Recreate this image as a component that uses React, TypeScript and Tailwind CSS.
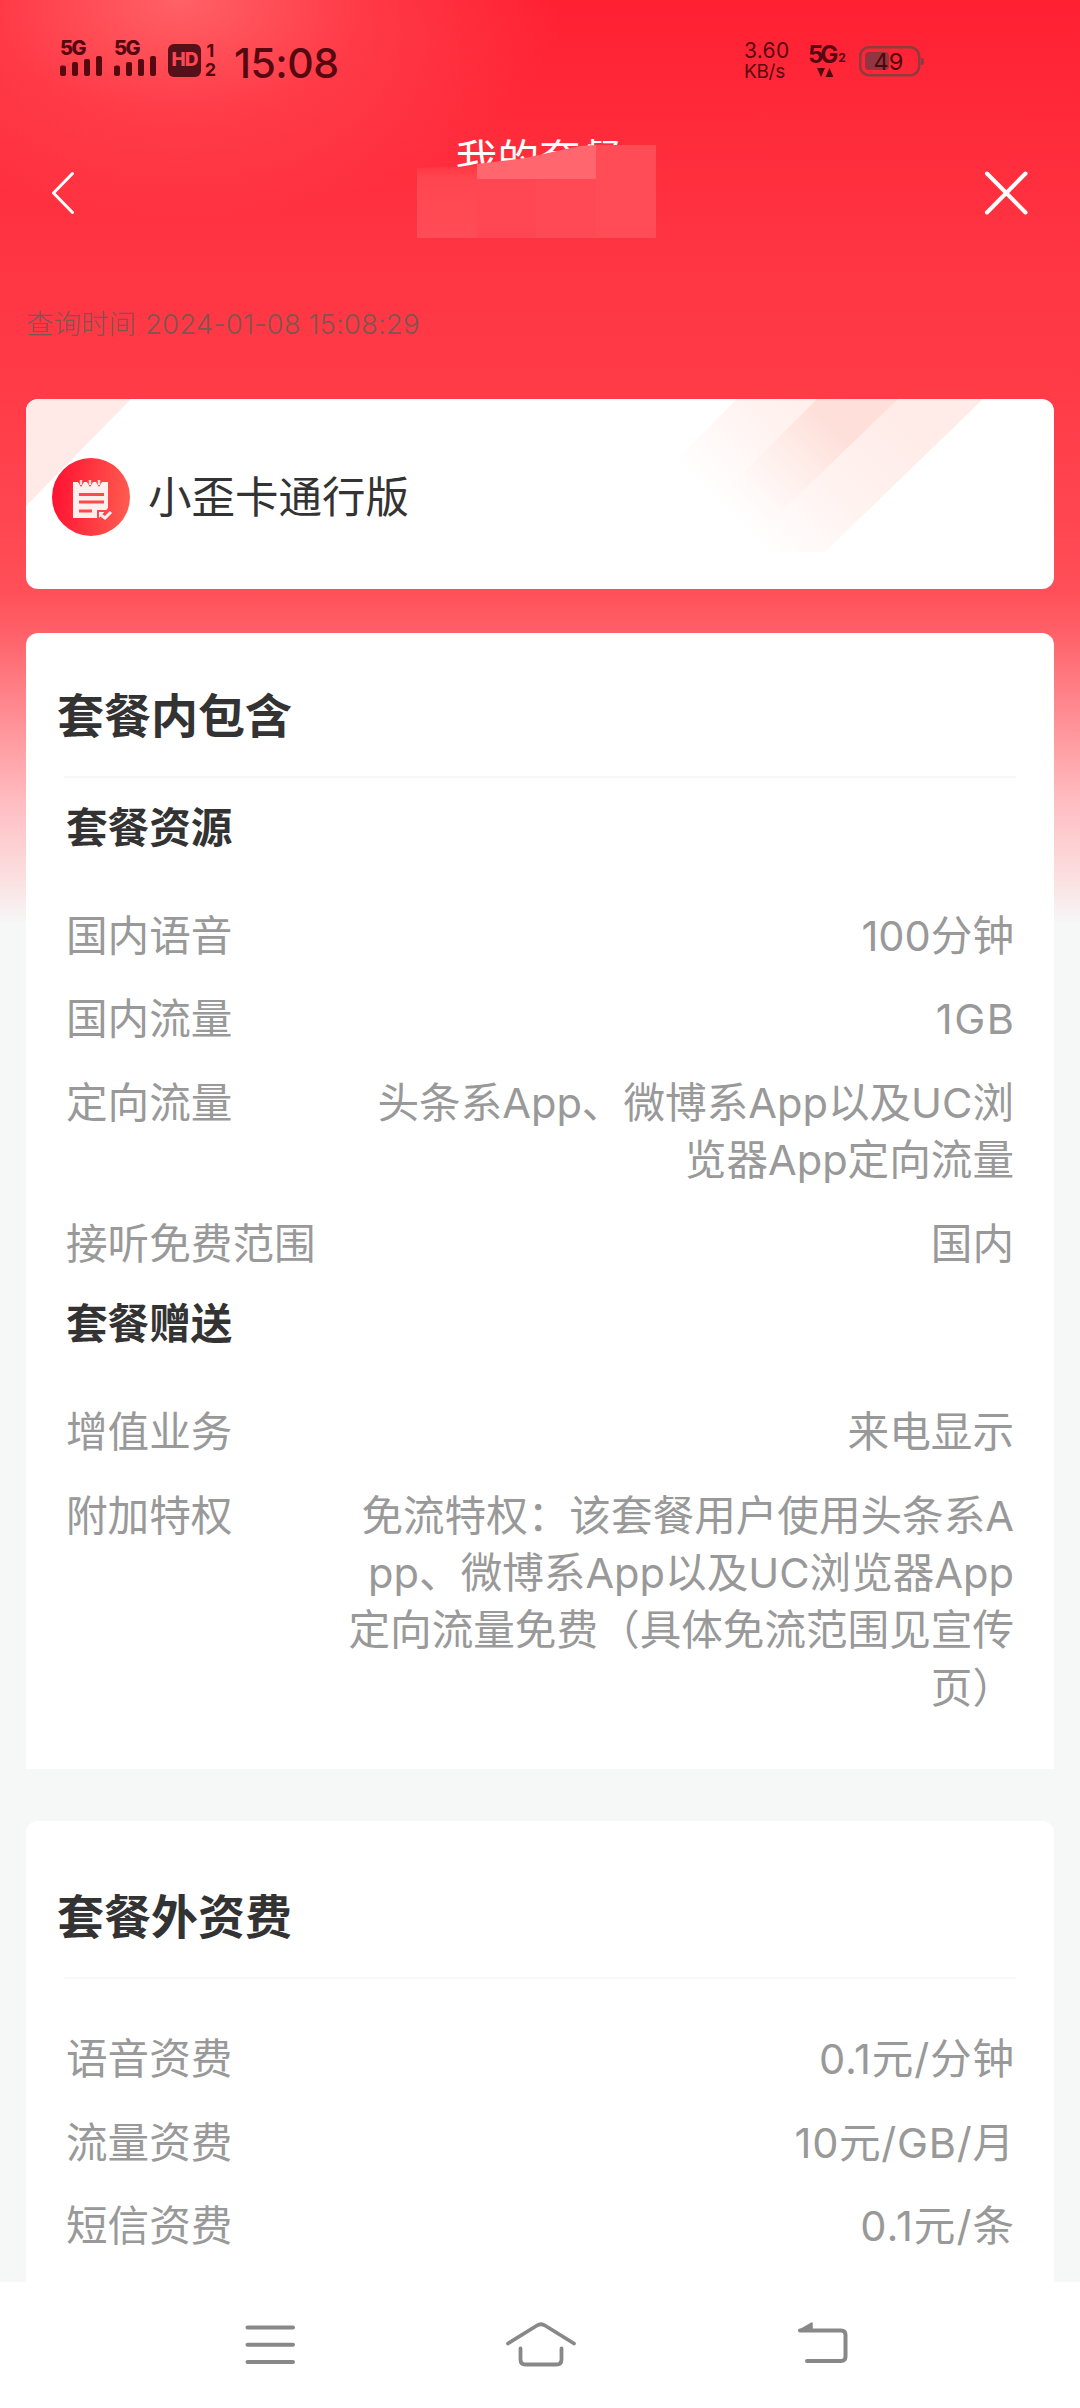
import React from 'react';

interface PlanRow {
  label: string;
  lines: string[];
  spacing?: string;
}

interface PlanGroup {
  title: string;
  offset: string;
  rows: PlanRow[];
}

const includedGroups: PlanGroup[] = [
  {
    title: '套餐资源',
    offset: 'mt-0',
    rows: [
      { label: '国内语音', lines: ['100分钟'] },
      { label: '国内流量', lines: ['1GB'], spacing: 'tracking-[1.5px] -mr-[1.5px]' },
      { label: '定向流量', lines: ['头条系App、微博系App以及UC浏', '览器App定向流量'] },
      { label: '接听免费范围', lines: ['国内'] }
    ]
  },
  {
    title: '套餐赠送',
    offset: '-mt-[3px]',
    rows: [
      { label: '增值业务', lines: ['来电显示'] },
      {
        label: '附加特权',
        lines: [
          '免流特权：该套餐用户使用头条系A',
          'pp、微博系App以及UC浏览器App',
          '定向流量免费（具体免流范围见宣传',
          '页）'
        ]
      }
    ]
  }
];

const extraRows: PlanRow[] = [
  { label: '语音资费', lines: ['0.1元/分钟'], spacing: 'tracking-[0.8px] -mr-[0.8px]' },
  { label: '流量资费', lines: ['10元/GB/月'], spacing: 'tracking-[0.7px] -mr-[0.7px]' },
  { label: '短信资费', lines: ['0.1元/条'], spacing: 'tracking-[1px] -mr-[1px]' }
];

const Signal: React.FC = () => (
  <div className="flex w-[54px] flex-col">
    <span className="h-[16px] text-[20px] leading-[16px] font-extrabold tracking-[-1.5px]">5G</span>
    <svg className="block" width="44" height="20" viewBox="0 0 44 20" fill="currentColor">
      <rect x="0" y="9.5" width="6" height="10.5" rx="2" />
      <rect x="12" y="6" width="6" height="14" rx="2" />
      <rect x="24" y="3" width="6" height="17" rx="2" />
      <rect x="36" y="0" width="6" height="20" rx="2" />
    </svg>
  </div>
);

const StatusBar: React.FC = () => (
  <div className="flex h-[120px] shrink-0 items-start justify-between pr-[155px] pl-[60px] text-[#560810]">
    <div className="flex items-start">
      <div className="flex pt-[40px]">
        <Signal />
        <Signal />
      </div>
      <div className="mt-[44px] flex h-[33px] w-[33px] items-center justify-center rounded-[6px] bg-[#56101a] text-[19px] font-extrabold tracking-[-1px] text-[#ff4652]">
        HD
      </div>
      <div className="mt-[41px] ml-[3px] flex w-[13px] flex-col items-center text-[18px] leading-[19px] font-bold">
        <span>1</span>
        <span>2</span>
      </div>
      <span className="mt-[38px] ml-[17px] text-[41px] leading-[50px] font-medium tracking-[-0.5px]">15:08</span>
    </div>

    <div className="flex items-start">
      <div className="mt-[41px] flex w-[64px] flex-col">
        <span className="text-[21px] leading-[20px] tracking-[0.3px]">3.60</span>
        <span className="text-[19px] leading-[21px] tracking-[-0.3px]">KB/s</span>
      </div>
      <div className="mt-[45px] flex w-[51px] flex-col">
        <div className="flex h-[20px] items-end leading-[20px] font-bold">
          <span className="text-[24px] tracking-[-3px]">5G</span>
          <span className="ml-[3px] text-[12px] leading-[15px]">2</span>
        </div>
        <svg className="ml-[9px] block" width="17" height="12" viewBox="0 0 17 12" fill="currentColor">
          <path d="M0 3h8L4 12zM8.5 12h8l-4-9z" />
        </svg>
      </div>
      <svg className="mt-[45px] block" width="66" height="32" viewBox="0 0 66 32">
        <rect x="1.2" y="2.2" width="59" height="28" rx="9" fill="none" stroke="#8f3a3e" strokeWidth="2.6" />
        <rect x="6" y="7" width="24" height="18" rx="4" fill="#8f3640" />
        <path d="M62 13h1q2 0 2 3.500t-2 3.500h-1z" fill="#8f3a3e" />
        <text x="14.500" y="25" fill="#4d060c" className="text-[23.500px]">49</text>
      </svg>
    </div>
  </div>
);

const Header: React.FC = () => (
  <header className="relative flex h-[146px] shrink-0 items-center justify-between pr-[52px] pl-[49px] text-white">
    <svg width="28" height="48" viewBox="0 0 28 48" fill="none" stroke="currentColor" strokeWidth="3" strokeLinecap="round" strokeLinejoin="round">
      <path d="M23.500 4.500L4.500 24l19 19.500" />
    </svg>
    <h1 className="mb-[66px] ml-[17px] text-[41.600px] leading-[56px]">我的套餐</h1>
    <svg width="44" height="48" viewBox="0 0 44 48" fill="none" stroke="currentColor" strokeWidth="4" strokeLinecap="round">
      <path d="M3 4.500l38.500 39M41.500 4.500L3 43.500" />
    </svg>
    {/* Mosaic over the lower part of the title */}
    <svg className="absolute top-[23px] left-[417px]" width="239" height="96" viewBox="0 0 239 96">
      <defs>
        <linearGradient id="mosaicEdge" x1="0" x2="0" y1="0" y2="1">
          <stop offset="0" stopColor="#ff3542" />
          <stop offset="0.2" stopColor="#ff4650" />
          <stop offset="1" stopColor="#ff4c56" />
        </linearGradient>
      </defs>
      <path d="M0 25L41 24L60 21V95H0z" fill="url(#mosaicEdge)" />
      <path d="M60 36H179V95H60z" fill="#ff4652" />
      <path d="M119 36H179V95H119z" fill="#ff4a56" />
      <path d="M179 2H239V95H179z" fill="#ff4c56" />
      <path d="M60 21L108 15L163 3L179 2V36H60z" fill="#ff666d" />
    </svg>
  </header>
);

const PlanCard: React.FC = () => (
  <section className="relative mx-[26px] flex h-[190px] shrink-0 items-center overflow-hidden rounded-[12px] bg-white pt-[6px] pl-[26px]">
    <svg className="absolute inset-0" width="1028" height="190" viewBox="0 0 1028 190">
      <defs>
        <linearGradient id="stripe" gradientUnits="userSpaceOnUse" x1="850" y1="-20" x2="708" y2="122">
          <stop offset="0" stopColor="#ffebe8" />
          <stop offset="0.5" stopColor="#fff2ef" />
          <stop offset="1" stopColor="#fff" />
        </linearGradient>
        <linearGradient id="stripeDark" gradientUnits="userSpaceOnUse" x1="850" y1="-10" x2="728" y2="112">
          <stop offset="0" stopColor="#ffdfd9" />
          <stop offset="0.35" stopColor="#fee0da" />
          <stop offset="1" stopColor="#fff3f1" stopOpacity="0" />
        </linearGradient>
      </defs>
      <path d="M0 0H105L0 107z" fill="#ffeae8" />
      <path d="M711 0L646 65Q650 95 694 140Q710 153 730 153H799L957 0z" fill="url(#stripe)" />
      <path d="M791 0L704 87Q712 112 736 131L872 0z" fill="url(#stripeDark)" />
    </svg>
    <svg className="relative" width="78" height="78" viewBox="0 0 78 78">
      <defs>
        <linearGradient id="badge" x1="0" x2="1" y1="0.500" y2="0.600">
          <stop offset="0" stopColor="#ff1232" />
          <stop offset="1" stopColor="#ff5c50" />
        </linearGradient>
      </defs>
      <circle cx="39" cy="39" r="39" fill="url(#badge)" />
      <path d="M21 24h5l3 5 3-5h3l3 5 3-5h3l3 5 3-5h6v26l-9 10H21z" fill="#fff0ee" />
      <path d="M29 22v5M38 22v5M47 22v5" stroke="#ffd9d8" strokeWidth="2.500" />
      <path d="M27 36.500h25M27 44h25M27 53h13" stroke="#ff4a4c" strokeWidth="3" />
      <path d="M46 61v-8h11" fill="none" stroke="#ff4a4c" strokeWidth="2" />
      <path d="M49 57l4 3 6-6" fill="none" stroke="#fff0ee" strokeWidth="3" />
    </svg>
    <span className="relative ml-[18px] text-[43.500px] leading-[60px] text-[#333]">小歪卡通行版</span>
  </section>
);

const InfoRow: React.FC<{ row: PlanRow }> = ({ row }) => (
  <div className="mb-[26.300px] flex justify-between text-[41.600px] leading-[57.300px] text-[#999]">
    <span>{row.label}</span>
    <div className={`text-right ${row.spacing ?? ''}`}>
      {row.lines.map((line) => (
        <p key={line} className="whitespace-nowrap">{line}</p>
      ))}
    </div>
  </div>
);

const SectionTitle: React.FC<{ children: React.ReactNode }> = ({ children }) => (
  <h2 className="pl-[31px] text-[47px] leading-[64px] font-bold text-[#333]">{children}</h2>
);

const NavBar: React.FC = () => (
  <nav className="flex h-[126px] shrink-0 items-center bg-white pl-[243px] text-[#888]">
    <svg width="54" height="46" viewBox="0 0 54 46" fill="none" stroke="currentColor" strokeWidth="4" strokeLinecap="round">
      <path d="M4.500 5.500h45.500M4.500 22.800h45.500M4.500 40h45.500" />
    </svg>
    <svg className="ml-[207px]" width="74" height="48" viewBox="0 0 74 48" fill="none" stroke="currentColor" strokeWidth="3.800" strokeLinecap="round" strokeLinejoin="round">
      <path d="M4 22.500L33 4.500q4-2.500 8 0l29 18" />
      <path d="M16.500 27.500v11q0 5 5 5h31q5 0 5-5v-11" />
    </svg>
    <svg className="ml-[219px]" width="54" height="48" viewBox="0 0 54 48" fill="none" stroke="currentColor" strokeWidth="4" strokeLinecap="round">
      <path d="M3 9.500h41q4.500 0 4.500 4.500v21.500q0 4.500-4.500 4.500H10" />
      <path d="M2 9.500L15 2v7.500z" fill="currentColor" strokeWidth="1.500" strokeLinejoin="round" />
    </svg>
  </nav>
);

const App: React.FC = () => {
  return (
    <div className="flex h-[2408px] w-[1080px] flex-col overflow-hidden bg-[#f6f8f8] bg-[radial-gradient(ellipse_380px_220px_at_180px_0px,rgba(255,125,125,0.7),rgba(255,85,92,0.45)_50%,rgba(255,60,70,0)_100%),linear-gradient(180deg,#ff2032_0px,#ff2a3a_120px,#ff3341_230px,#ff3c48_400px,#ff4650_520px,#ff4f58_590px,#ff6068_632px,#ff8d93_715px,#ffbcc0_800px,#fbe0e1_880px,#f6f8f8_925px)] font-[Inter,'Noto_Sans_CJK_SC',sans-serif]">
      <div className="flex min-h-0 flex-1 flex-col overflow-hidden">
        <StatusBar />
        <Header />

        <div className="flex h-[133px] shrink-0 items-start pt-[38px] pl-[26px] text-[27.500px] leading-[40px] font-light text-[#7d5650]">
          <span>查询时间</span>
          <span className="ml-[9px] tracking-[0.150px]">2024-01-08 15:08:29</span>
        </div>

        <PlanCard />

        <section className="mx-[26px] mt-[44px] h-[1136px] shrink-0 rounded-t-[12px] bg-white pt-[51px]">
          <SectionTitle>套餐内包含</SectionTitle>
          <div className="mx-[38px] mt-[28px] h-[2px] bg-[#f8f8f8]" />
          <div className="px-[40px] pt-[22px]">
            {includedGroups.map((group) => (
              <div key={group.title} className={group.offset}>
                <h3 className="mb-[50.500px] text-[41.600px] leading-[57.300px] font-bold text-[#333]">{group.title}</h3>
                {group.rows.map((row) => (
                  <InfoRow key={row.label} row={row} />
                ))}
              </div>
            ))}
          </div>
        </section>

        <section className="mx-[26px] mt-[52px] h-[500px] shrink-0 rounded-t-[12px] bg-white pt-[64px]">
          <SectionTitle>套餐外资费</SectionTitle>
          <div className="mx-[38px] mt-[28px] h-[2px] bg-[#f8f8f8]" />
          <div className="px-[40px] pt-[52px]">
            {extraRows.map((row) => (
              <InfoRow key={row.label} row={row} />
            ))}
          </div>
        </section>
      </div>

      <NavBar />
    </div>
  );
};

export default App;
